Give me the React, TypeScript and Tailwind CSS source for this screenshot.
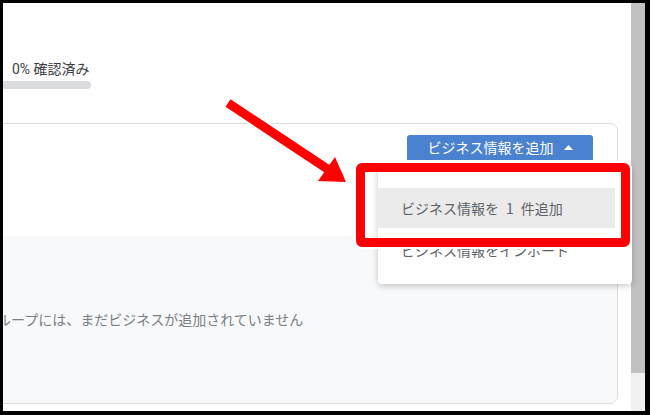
import React from 'react';

const jp = { fontFamily: '"Noto Sans CJK JP", "Noto Sans", sans-serif' };
const latinJp = { fontFamily: 'Roboto, "Noto Sans CJK JP", sans-serif' };

const Caret = () => (
  <svg width="9" height="5" viewBox="0 0 9 5" className="ml-[10px]">
    <path d="M0 5 L4.5 0 L9 5 Z" fill="white" />
  </svg>
);

// Red callout arrow pointing at the menu
const Arrow = () => (
  <svg
    width="642"
    height="408"
    viewBox="3 3 642 408"
    className="absolute left-0 top-0 pointer-events-none"
  >
    <line x1="228" y1="103" x2="334" y2="173" stroke="white" strokeWidth="13" strokeLinecap="round" />
    <polygon points="348,183 335,155 318,182" fill="white" stroke="white" strokeWidth="4" strokeLinejoin="round" />
    <line x1="228" y1="103" x2="332" y2="172" stroke="#ff0000" strokeWidth="9" />
    <polygon points="346,182 335,157 318,181" fill="#ff0000" />
  </svg>
);

const App: React.FC = () => {
  return (
    <div className="w-[650px] h-[415px] box-border border-black border-t-[3px] border-l-[3px] border-r-[5px] border-b-[4px] relative overflow-hidden bg-white flex">
      <div className="flex-1 flex flex-col overflow-hidden bg-white">
        <div className="h-[120px] pt-[57px] flex flex-col shrink-0">
          <div className="pl-[9px] text-[14px] leading-[19px] text-[#3c4043]" style={latinJp}>
            0% 確認済み
          </div>
          <div className="mt-[2px] -ml-[20px] w-[108px] h-[8px] rounded-full bg-[#dadce0]" />
        </div>

        <div className="-ml-[60px] mr-[13px] h-[281px] shrink-0 border border-[#dadce0] rounded-lg overflow-hidden flex flex-col">
          <div className="h-[112px] shrink-0 bg-white flex justify-end items-start pt-[11px] pr-[24px]">
            <button
              className="w-[186px] h-[25px] rounded-t-[3px] bg-[#4a82d0] text-white text-[14px] flex items-center justify-center"
              style={jp}
            >
              ビジネス情報を追加
              <Caret />
            </button>
          </div>
          <div className="flex-1 bg-[#f8f9fa] flex items-center pl-[11px]">
            <span className="text-[14px] text-[#7a7f85] whitespace-nowrap" style={jp}>
              このグループには、まだビジネスが追加されていません
            </span>
          </div>
        </div>
      </div>

      <div className="w-[14px] shrink-0 flex flex-col">
        <div className="h-[370px] bg-[#c1c1c1]" />
        <div className="flex-1 bg-[#f1f1f1]" />
      </div>

      {/* open menu under the add button */}
      <div className="absolute left-[375px] top-[161px] w-[254px] bg-white rounded-[4px] shadow-[0_2px_6px_rgba(0,0,0,0.22)] pt-[24px] pb-[12px] pr-[17px]">
        <div className="h-[40px] bg-[#ebebeb] pl-[23px] flex items-center text-[14px] text-[#5f6368] whitespace-pre" style={jp}>
          {'ビジネス情報を\u20021\u2002件追加'}
        </div>
        <div className="h-[44px] pl-[23px] flex items-center text-[14px] text-[#5f6368]" style={jp}>
          ビジネス情報をインポート
        </div>
      </div>

      {/* highlight frame */}
      <div className="absolute left-[353px] top-[160px] w-[274px] h-[84px] border-[9px] border-[#ff0000] rounded-[6px] shadow-[0_0_0_2px_white]" />

      <Arrow />
    </div>
  );
};

export default App;
